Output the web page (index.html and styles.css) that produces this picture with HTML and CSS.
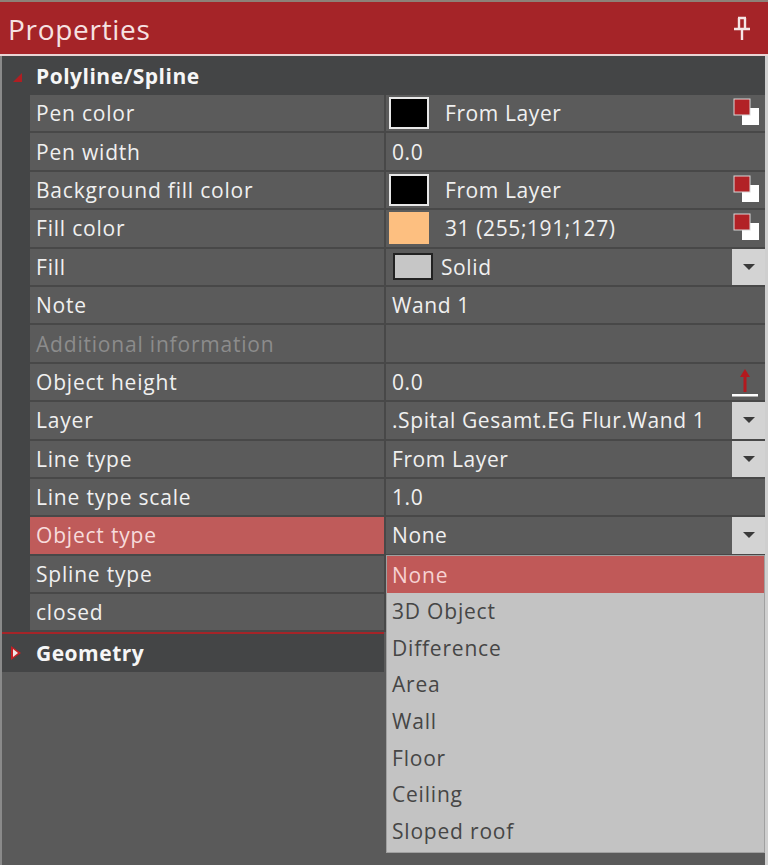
FILE: index.html
```html
<!DOCTYPE html>
<html>
<head>
<meta charset="utf-8">
<link rel="stylesheet" href="styles.css">
</head>
<body>
<div class="panel">
  <div class="titlebar">
    <span class="title">Properties</span>
    <svg class="pin" width="20" height="26" viewBox="0 0 20 26">
      <path d="M6 2h8M7 2v11M13 2v11M2 13h16M10 13v11" stroke="#f6e6e6" stroke-width="2.4" fill="none"/>
    </svg>
  </div>
  <div class="section">
    <span class="tri-open"></span>
    <span class="section-title">Polyline/Spline</span>
  </div>
  <div class="props">
    <div class="row">
      <div class="name">Pen color</div>
      <div class="value"><span class="swatch black"></span><span class="vt">From Layer</span>
        <svg class="layericon" width="32" height="30" viewBox="0 0 32 30"><rect x="9" y="10" width="17" height="17" fill="#fff"/><rect x="1" y="1" width="16" height="16" fill="#b22226" stroke="#d8d8d8" stroke-width="1"/></svg>
      </div>
    </div>
    <div class="row">
      <div class="name">Pen width</div>
      <div class="value"><span class="vt">0.0</span></div>
    </div>
    <div class="row">
      <div class="name">Background fill color</div>
      <div class="value"><span class="swatch black"></span><span class="vt">From Layer</span>
        <svg class="layericon" width="32" height="30" viewBox="0 0 32 30"><rect x="9" y="10" width="17" height="17" fill="#fff"/><rect x="1" y="1" width="16" height="16" fill="#b22226" stroke="#d8d8d8" stroke-width="1"/></svg>
      </div>
    </div>
    <div class="row">
      <div class="name">Fill color</div>
      <div class="value"><span class="swatch peach"></span><span class="vt">31 (255;191;127)</span>
        <svg class="layericon" width="32" height="30" viewBox="0 0 32 30"><rect x="9" y="10" width="17" height="17" fill="#fff"/><rect x="1" y="1" width="16" height="16" fill="#b22226" stroke="#d8d8d8" stroke-width="1"/></svg>
      </div>
    </div>
    <div class="row">
      <div class="name">Fill</div>
      <div class="value"><span class="swatch grey"></span><span class="vt solid">Solid</span><span class="ddbtn"><span class="ddtri"></span></span></div>
    </div>
    <div class="row">
      <div class="name">Note</div>
      <div class="value"><span class="vt">Wand 1</span></div>
    </div>
    <div class="row">
      <div class="name disabled">Additional information</div>
      <div class="value"></div>
    </div>
    <div class="row">
      <div class="name">Object height</div>
      <div class="value"><span class="vt">0.0</span>
        <svg class="arrowicon" width="28" height="32" viewBox="0 0 28 32"><path d="M14 3l-5 8h3.5v15h3v-15h3.5z" fill="#b3191e"/><rect x="1" y="28" width="26" height="2.5" fill="#fff"/></svg>
      </div>
    </div>
    <div class="row">
      <div class="name">Layer</div>
      <div class="value"><span class="vt">.Spital Gesamt.EG Flur.Wand 1</span><span class="ddbtn"><span class="ddtri"></span></span></div>
    </div>
    <div class="row">
      <div class="name">Line type</div>
      <div class="value"><span class="vt">From Layer</span><span class="ddbtn"><span class="ddtri"></span></span></div>
    </div>
    <div class="row">
      <div class="name">Line type scale</div>
      <div class="value"><span class="vt">1.0</span></div>
    </div>
    <div class="row">
      <div class="name selected">Object type</div>
      <div class="value menuhost"><span class="vt">None</span><span class="ddbtn"><span class="ddtri"></span></span>
        <ul class="dropdown">
          <li class="hl">None</li>
          <li>3D Object</li>
          <li>Difference</li>
          <li>Area</li>
          <li>Wall</li>
          <li>Floor</li>
          <li>Ceiling</li>
          <li>Sloped roof</li>
        </ul>
      </div>
    </div>
    <div class="row">
      <div class="name">Spline type</div>
      <div class="value"></div>
    </div>
    <div class="row">
      <div class="name">closed</div>
      <div class="value"></div>
    </div>
  </div>
  <div class="section geometry">
    <span class="tri-closed"></span>
    <span class="section-title">Geometry</span>
  </div>
</div>
</body>
</html>
```
FILE: styles.css
```css
html, body {
  margin: 0;
  padding: 0;
}
body {
  width: 768px;
  height: 865px;
  overflow: hidden;
  background: #5a5a5a;
  font-family: "Open Sans", "Noto Sans", sans-serif;
  color: #f0f0f0;
}
.panel {
  height: 865px;
  border-left: 2px solid #8a8a8a;
  border-right: 3px solid #cfcfcf;
  box-sizing: border-box;
  background: #5a5a5a;
}
.titlebar {
  height: 52px;
  background: #a52428;
  border-top: 2px solid #8d8178;
  border-bottom: 2px solid #ead4d4;
  display: flex;
  align-items: center;
  justify-content: space-between;
  padding: 0 16px 0 8px;
  margin-left: -2px;
  margin-right: -3px;
}
.title {
  font-size: 28px;
  color: #f6e2e2;
  letter-spacing: 0.7px;
  margin-top: 2px;
}
.pin {
  display: block;
  margin-top: 2px;
}
.section {
  height: 39px;
  background: #444546;
  display: flex;
  align-items: center;
}
.section-title {
  font-weight: bold;
  font-size: 21px;
  color: #f6f6f6;
  margin-left: 34px;
  letter-spacing: 0.5px;
}
.section .tri-open {
  width: 0;
  height: 0;
  border-left: 9px solid transparent;
  border-bottom: 9px solid #b01e22;
  margin-left: 11px;
  margin-right: -20px;
  margin-top: 3px;
}
.section .tri-closed {
  width: 0;
  height: 0;
  border-top: 7px solid transparent;
  border-bottom: 7px solid transparent;
  border-left: 10px solid #c42025;
  margin-left: 9px;
  margin-right: -19px;
  position: relative;
}
.section .tri-closed::after {
  content: "";
  position: absolute;
  left: -8px;
  top: -4px;
  border-top: 4px solid transparent;
  border-bottom: 4px solid transparent;
  border-left: 5px solid #f2e8e8;
}
.geometry {
  width: 382px;
  border-top: 2px solid #a52428;
  height: 38px;
}
.props {
  background: #444546;
  padding-left: 28px;
}
.row {
  display: flex;
  height: 38.4px;
  box-sizing: border-box;
  border-bottom: 2px solid #484848;
  font-size: 21px;
}
.name {
  width: 354px;
  box-sizing: border-box;
  padding-left: 6px;
  background: #5b5b5b;
  display: flex;
  align-items: center;
  letter-spacing: 0.8px;
  white-space: nowrap;
}
.name.disabled {
  color: #8c8c8c;
}
.name.selected {
  background: #bf5b5a;
  color: #f7dcdc;
}
.value {
  flex: 1;
  background: #5b5b5b;
  border-left: 2px solid #484848;
  display: flex;
  align-items: center;
  padding-left: 3px;
  position: relative;
  white-space: nowrap;
  letter-spacing: 0.6px;
}
.vt {
  margin-left: 3px;
}
.swatch {
  width: 40px;
  height: 32px;
  box-sizing: border-box;
  margin-right: 13px;
  flex: none;
}
.swatch.black {
  background: #000;
  border: 2px solid #e8e8e8;
}
.swatch.peach {
  background: #fdbf80;
  border: 2px solid #fdbf80;
}
.swatch.grey {
  background: #c6c6c6;
  border: 2px solid #222;
  width: 40px;
  height: 27px;
  margin-left: 4px;
  margin-right: 5px;
}
.layericon {
  position: absolute;
  right: 0;
  top: 3px;
}
.arrowicon {
  position: absolute;
  right: 6px;
  top: 2px;
}
.ddbtn {
  position: absolute;
  right: 0;
  top: 0;
  bottom: 0;
  width: 33px;
  background: #d3d3d3;
  display: flex;
  align-items: center;
  justify-content: center;
}
.ddtri {
  width: 0;
  height: 0;
  border-left: 6px solid transparent;
  border-right: 6px solid transparent;
  border-top: 6px solid #3a3a3a;
}
.dropdown {
  position: absolute;
  left: 0;
  top: 38px;
  width: 379px;
  margin: 0;
  padding: 0 0 3px 0;
  list-style: none;
  background: #c3c3c3;
  border: 1px solid #a0a0a0;
  box-sizing: border-box;
  z-index: 5;
}
.dropdown li {
  height: 36.6px;
  display: flex;
  align-items: center;
  padding-left: 5px;
  color: #464646;
  font-size: 21px;
  letter-spacing: 0.8px;
}
.dropdown li.hl {
  background: #c05958;
  color: #f7d2d2;
}
```
